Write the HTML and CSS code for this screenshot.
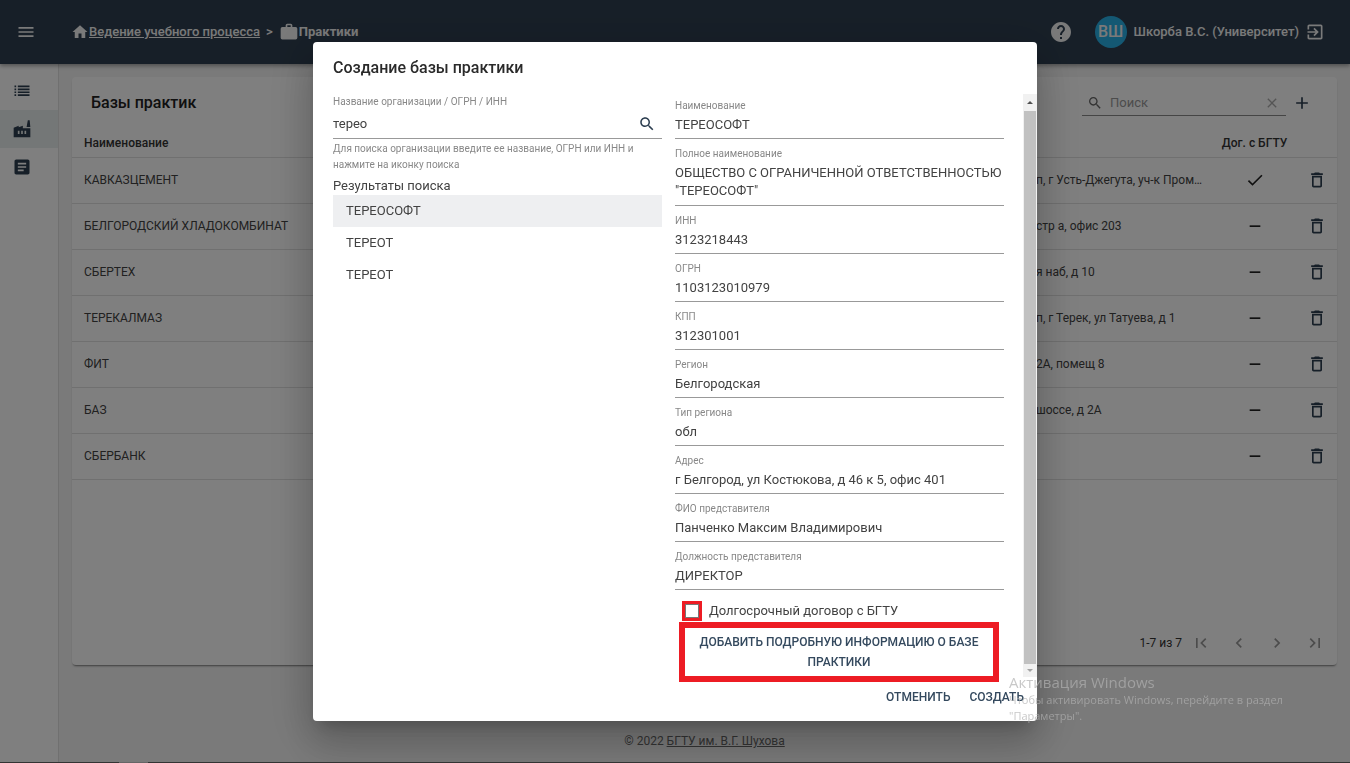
FILE: index.html
```html
<!DOCTYPE html>
<html lang="ru">
<head>
<meta charset="utf-8">
<meta name="viewport" content="width=device-width, initial-scale=1">
<title>Практики</title>
<link rel="stylesheet" href="styles.css">
</head>
<body>
<svg class="sprite" aria-hidden="true">
  <symbol id="trash" viewBox="0 0 24 24"><path d="M6 19c0 1.100.9 2 2 2h8c1.100 0 2-.9 2-2V7H6v12zM8 9h8v10H8V9zm7.500-5l-1-1h-5l-1 1H5v2h14V4z"/></symbol>
  <symbol id="minus" viewBox="0 0 24 24"><path d="M4 11h16v2.500H4z"/></symbol>
  <symbol id="search" viewBox="0 0 24 24"><path d="M15.500 14h-.79l-.28-.27C15.410 12.590 16 11.110 16 9.500 16 5.910 13.090 3 9.500 3S3 5.910 3 9.500 5.910 16 9.500 16c1.610 0 3.090-.59 4.230-1.570l.27.28v.79l5 4.990L20.490 19l-4.990-5zm-6 0C7.010 14 5 11.990 5 9.500S7.010 5 9.500 5 14 7.010 14 9.500 11.990 14 9.500 14z"/></symbol>
</svg>
<div class="app">
  <header class="topbar">
    <button class="icon-btn menu" aria-label="Меню"><svg class="icon i20" viewBox="0 0 24 24"><path d="M3 18h18v-2H3v2zm0-5h18v-2H3v2zm0-7v2h18V6H3z"/></svg></button>
    <nav class="crumbs">
      <svg class="icon i18" viewBox="0 0 24 24"><path d="M10 20v-6h4v6h5v-8h3L12 3 2 12h3v8z"/></svg>
      <a href="#">Ведение учебного процесса</a>
      <span class="sep">&gt;</span>
      <svg class="icon i20" viewBox="0 0 24 24"><path d="M10 2h4a2 2 0 0 1 2 2v2h4a2 2 0 0 1 2 2v11a2 2 0 0 1-2 2H4a2 2 0 0 1-2-2V8a2 2 0 0 1 2-2h4V4a2 2 0 0 1 2-2m4 4V4h-4v2h4z"/></svg>
      <strong>Практики</strong>
    </nav>
    <div class="account">
      <button class="icon-btn help" aria-label="Помощь"><svg class="icon i24" viewBox="0 0 24 24"><path d="M12 2C6.480 2 2 6.480 2 12s4.480 10 10 10 10-4.480 10-10S17.520 2 12 2zm1 17h-2v-2h2v2zm2.070-7.750l-.9.920C13.450 12.900 13 13.500 13 15h-2v-.5c0-1.100.45-2.100 1.170-2.830l1.240-1.260c.37-.36.590-.86.590-1.410 0-1.100-.9-2-2-2s-2 .9-2 2H8c0-2.210 1.790-4 4-4s4 1.790 4 4c0 .88-.36 1.680-.93 2.250z"/></svg></button>
      <span class="avatar">ВШ</span>
      <span class="user">Шкорба В.С. (Университет)</span>
      <button class="icon-btn exit" aria-label="Выйти"><svg class="icon i20" viewBox="0 0 24 24"><path d="M10.090 15.590L11.500 17l5-5-5-5-1.410 1.410L12.670 11H3v2h9.670l-2.580 2.590zM19 3H5c-1.110 0-2 .9-2 2v4h2V5h14v14H5v-4H3v4c0 1.100.89 2 2 2h14c1.100 0 2-.9 2-2V5c0-1.100-.9-2-2-2z"/></svg></button>
    </div>
  </header>
  <div class="workspace">
    <nav class="sidebar">
      <a href="#" aria-label="Список"><svg class="icon i20" viewBox="0 0 24 24"><path d="M3 5.500h2v2H3zm4 0h14v2H7zM3 9h2v2H3zm4 0h14v2H7zm-4 3.500h2v2H3zm4 0h14v2H7zM3 16h2v2H3zm4 0h14v2H7z"/></svg></a>
      <a href="#" class="active" aria-label="Базы практик"><svg class="icon i20" viewBox="0 0 24 24"><path fill-rule="evenodd" d="M2 22V10.500L8 8v2l5-2v3h9v11zM19 1.500h2.200L22 9.500h-4.500zM7 14v4h2v-4zm4 0v4h2v-4zm4 0v4h2v-4z"/></svg></a>
      <a href="#" aria-label="Документы"><svg class="icon i20" viewBox="0 0 24 24"><path d="M19 3H5c-1.100 0-2 .9-2 2v14c0 1.100.9 2 2 2h14c1.100 0 2-.9 2-2V5c0-1.100-.9-2-2-2zm-5 14H7v-2h7v2zm3-4H7v-2h10v2zm0-4H7V7h10v2z"/></svg></a>
    </nav>
    <main class="main">
      <section class="card">
        <div class="card-head">
          <h1>Базы практик</h1>
          <label class="search">
            <svg class="icon i16"><use href="#search"/></svg>
            <input type="text" placeholder="Поиск" aria-label="Поиск">
            <svg class="icon i16 clear" viewBox="0 0 24 24"><path d="M19 6.410L17.590 5 12 10.590 6.410 5 5 6.410 10.590 12 5 17.590 6.410 19 12 13.410 17.590 19 19 17.590 13.410 12z"/></svg>
          </label>
          <button class="icon-btn add" aria-label="Добавить"><svg class="icon i20" viewBox="0 0 24 24"><path d="M19 13h-6v6h-2v-6H5v-2h6V5h2v6h6v2z"/></svg></button>
        </div>
        <table>
          <colgroup><col><col class="c-addr"><col class="c-flag"><col class="c-act"></colgroup>
          <thead><tr><th>Наименование</th><th></th><th class="mid">Дог. с БГТУ</th><th></th></tr></thead>
          <tbody>
            <tr><td>КАВКАЗЦЕМЕНТ</td><td class="addr">п, г Усть-Джегута, уч-к Пром…</td><td class="mid"><svg class="icon i20" viewBox="0 0 24 24"><path d="M9 16.170L4.830 12l-1.420 1.410L9 19 21 7l-1.410-1.410z"/></svg></td><td class="mid"><button class="icon-btn" aria-label="Удалить"><svg class="icon i20"><use href="#trash"/></svg></button></td></tr>
            <tr><td>БЕЛГОРОДСКИЙ ХЛАДОКОМБИНАТ</td><td class="addr">стр а, офис 203</td><td class="mid"><svg class="icon i16"><use href="#minus"/></svg></td><td class="mid"><button class="icon-btn" aria-label="Удалить"><svg class="icon i20"><use href="#trash"/></svg></button></td></tr>
            <tr><td>СБЕРТЕХ</td><td class="addr">я наб, д 10</td><td class="mid"><svg class="icon i16"><use href="#minus"/></svg></td><td class="mid"><button class="icon-btn" aria-label="Удалить"><svg class="icon i20"><use href="#trash"/></svg></button></td></tr>
            <tr><td>ТЕРЕКАЛМАЗ</td><td class="addr">п, г Терек, ул Татуева, д 1</td><td class="mid"><svg class="icon i16"><use href="#minus"/></svg></td><td class="mid"><button class="icon-btn" aria-label="Удалить"><svg class="icon i20"><use href="#trash"/></svg></button></td></tr>
            <tr><td>ФИТ</td><td class="addr">2А, помещ 8</td><td class="mid"><svg class="icon i16"><use href="#minus"/></svg></td><td class="mid"><button class="icon-btn" aria-label="Удалить"><svg class="icon i20"><use href="#trash"/></svg></button></td></tr>
            <tr><td>БАЗ</td><td class="addr">шоссе, д 2А</td><td class="mid"><svg class="icon i16"><use href="#minus"/></svg></td><td class="mid"><button class="icon-btn" aria-label="Удалить"><svg class="icon i20"><use href="#trash"/></svg></button></td></tr>
            <tr><td>СБЕРБАНК</td><td class="addr"></td><td class="mid"><svg class="icon i16"><use href="#minus"/></svg></td><td class="mid"><button class="icon-btn" aria-label="Удалить"><svg class="icon i20"><use href="#trash"/></svg></button></td></tr>
          </tbody>
        </table>
        <div class="pager">
          <span>1-7 из 7</span>
          <button class="icon-btn" disabled aria-label="Первая"><svg class="icon i20" viewBox="0 0 24 24"><path d="M18.410 16.590L13.820 12l4.590-4.590L17 6l-6 6 6 6zM6 6h2v12H6z"/></svg></button>
          <button class="icon-btn" disabled aria-label="Назад"><svg class="icon i20" viewBox="0 0 24 24"><path d="M15.410 7.410L14 6l-6 6 6 6 1.410-1.410L10.830 12z"/></svg></button>
          <button class="icon-btn" disabled aria-label="Вперёд"><svg class="icon i20" viewBox="0 0 24 24"><path d="M10 6L8.590 7.410 13.170 12l-4.580 4.590L10 18l6-6z"/></svg></button>
          <button class="icon-btn" disabled aria-label="Последняя"><svg class="icon i20" viewBox="0 0 24 24"><path d="M5.590 7.410L10.180 12l-4.590 4.590L7 18l6-6-6-6zM16 6h2v12h-2z"/></svg></button>
        </div>
      </section>
      <footer class="footer">© 2022 <a href="#">БГТУ им. В.Г. Шухова</a></footer>
    </main>
  </div>
</div>

<div class="backdrop">
  <div class="dialog" role="dialog" aria-modal="true" aria-labelledby="dlg-title">
    <h2 id="dlg-title">Создание базы практики</h2>
    <div class="dialog-body">
      <div class="columns">
        <div class="finder">
          <div class="field">
            <label for="q">Название организации / ОГРН / ИНН</label>
            <div class="with-icon">
              <input id="q" type="text" value="терео">
              <button class="icon-btn" aria-label="Найти"><svg class="icon i18"><use href="#search"/></svg></button>
            </div>
          </div>
          <p class="hint">Для поиска организации введите ее название, ОГРН или ИНН и нажмите на иконку поиска</p>
          <p class="results-title">Результаты поиска</p>
          <ul class="results">
            <li><button class="selected">ТЕРЕОСОФТ</button></li>
            <li><button>ТЕРЕОТ</button></li>
            <li><button>ТЕРЕОТ</button></li>
          </ul>
        </div>
        <form class="details">
          <div class="field"><label for="f1">Наименование</label><input id="f1" type="text" value="ТЕРЕОСОФТ"></div>
          <div class="field"><label for="f2">Полное наименование</label><textarea id="f2" rows="2">ОБЩЕСТВО С ОГРАНИЧЕННОЙ ОТВЕТСТВЕННОСТЬЮ "ТЕРЕОСОФТ"</textarea></div>
          <div class="field"><label for="f3">ИНН</label><input id="f3" type="text" value="3123218443"></div>
          <div class="field"><label for="f4">ОГРН</label><input id="f4" type="text" value="1103123010979"></div>
          <div class="field"><label for="f5">КПП</label><input id="f5" type="text" value="312301001"></div>
          <div class="field"><label for="f6">Регион</label><input id="f6" type="text" value="Белгородская"></div>
          <div class="field"><label for="f7">Тип региона</label><input id="f7" type="text" value="обл"></div>
          <div class="field"><label for="f8">Адрес</label><input id="f8" type="text" value="г Белгород, ул Костюкова, д 46 к 5, офис 401"></div>
          <div class="field"><label for="f9">ФИО представителя</label><input id="f9" type="text" value="Панченко Максим Владимирович"></div>
          <div class="field"><label for="f10">Должность представителя</label><input id="f10" type="text" value="ДИРЕКТОР"></div>
          <div class="longterm"><span class="mark"><input id="lt" type="checkbox"></span><label for="lt">Долгосрочный договор с БГТУ</label></div>
          <button type="button" class="more">Добавить подробную информацию о базе практики</button>
        </form>
      </div>
      <div class="scrollbar" aria-hidden="true">
        <span class="arrow up"></span><span class="thumb"></span><span class="arrow down"></span>
      </div>
    </div>
    <div class="actions"><button>Отменить</button><button>Создать</button></div>
  </div>
</div>

<div class="taskbar"><span></span></div>
<div class="activation">
  <p class="activation-title">Активация Windows</p>
  <p>Чтобы активировать Windows, перейдите в раздел "Параметры".</p>
</div>
</body>
</html>
```

FILE: styles.css
```css
* { box-sizing: border-box; }
body, h1, h2, p, ul { margin: 0; padding: 0; }
body {
  font: 12px/16px Roboto, "Liberation Sans", sans-serif;
  color: #333;
  background: #f4f4f4;
}
button, input, textarea { font: inherit; color: inherit; margin: 0; }
input, textarea { padding: 0; border: 0; background: none; outline: 0; }
a { color: inherit; }
ul { list-style: none; }
.sprite { display: none; }

.icon { display: block; fill: currentColor; flex: none; }
.i16 { width: 16px; height: 16px; }
.i18 { width: 18px; height: 18px; }
.i20 { width: 20px; height: 20px; }
.i24 { width: 24px; height: 24px; }
.icon-btn {
  display: inline-flex;
  padding: 0;
  border: 0;
  background: none;
  color: #2c3e50;
  vertical-align: middle;
}

.app { display: flex; flex-direction: column; min-height: 100vh; }

/* Top bar */
.topbar {
  display: flex;
  align-items: center;
  height: 64px;
  padding: 0 25px 0 16px;
  background: #2f3f51;
  color: #f4f4f4;
  font-size: 13px;
  font-weight: 500;
  box-shadow: 0 2px 4px rgba(0, 0, 0, .35);
  z-index: 1;
}
.topbar .icon-btn { color: #f4f4f4; }
.crumbs { display: flex; align-items: center; margin-left: 35px; }
.crumbs strong { font-weight: 700; }
.crumbs .sep { margin: 0 6px; }
.account { display: flex; align-items: center; margin-left: auto; }
.avatar {
  display: grid;
  place-items: center;
  width: 32px;
  height: 32px;
  margin: 0 7px 0 22px;
  border-radius: 50%;
  background: #29b0e6;
  font-size: 16px;
}
.exit { margin-left: 6px; }

/* Side navigation */
.workspace { display: flex; flex: 1; }
.sidebar {
  width: 59px;
  padding-top: 8px;
  background: #fff;
  border-right: 1px solid #e0e0e0;
  color: #2c3e50;
}
.sidebar a { display: flex; align-items: center; height: 38px; padding-left: 12px; }
.sidebar .active { background: #e9eeee; }

/* List of organisations */
.main { display: flex; flex: 1; flex-direction: column; padding: 13px 13px 0; }
.card {
  display: flex;
  flex: 1;
  flex-direction: column;
  background: #fff;
  border-radius: 4px;
  box-shadow: 0 2px 2px -1px rgba(0, 0, 0, .5);
}
.card-head { display: flex; align-items: center; height: 52px; padding: 0 25px 0 19px; }
.card-head h1 { color: #212121; font-size: 16px; font-weight: 500; line-height: 20px; }
.search {
  display: flex;
  align-items: center;
  gap: 7px;
  width: 204px;
  height: 26px;
  margin-left: auto;
  border-bottom: 1px solid #8a8a8a;
  color: #666;
  font-size: 13px;
}
.search .icon:first-child { margin-left: -1px; }
.search { padding: 0 6px; }
.search input { flex: 1; min-width: 0; }
.search input::placeholder { color: #999; opacity: 1; }
.search .clear { color: #aaa; }
.add { margin-left: 6px; }
table { width: 100%; border-collapse: collapse; table-layout: fixed; }
.c-addr { width: 180px; }
.c-flag { width: 85px; }
.c-act { width: 40px; }
th, td { padding: 0 0 0 12px; border-bottom: 1px solid #e0e0e0; text-align: left; white-space: nowrap; }
th { height: 28px; font-weight: 500; }
td { height: 46px; color: #424242; }
.addr { padding-left: 4px; }
.mid { padding: 0; text-align: center; }
.mid .icon { margin: 0 auto; }
td.mid { color: #212121; }
.pager { display: flex; align-items: center; gap: 18px; margin: auto 12px 12px auto; }
.pager span { margin-right: -9px; }
.pager .icon-btn { color: #999; }
.footer { padding: 66px 0 12px; line-height: 20px; text-align: center; color: #666; }

/* Dialog */
.backdrop {
  position: fixed;
  inset: 0;
  display: grid;
  place-items: center;
  background: rgba(0, 0, 0, .5);
  z-index: 5;
}
.dialog {
  width: 724px;
  max-width: 94vw;
  background: #fff;
  border-radius: 4px;
  color: #424242;
  font-size: 13px;
  line-height: 18px;
  box-shadow: 0 11px 15px -7px rgba(0, 0, 0, .2), 0 24px 38px 3px rgba(0, 0, 0, .14), 0 9px 46px 8px rgba(0, 0, 0, .12);
}
.dialog h2 { padding: 16px 20px; color: #2a2a2a; font-size: 16px; font-weight: 500; line-height: 20px; }
.dialog-body { display: flex; }
.columns { display: grid; flex: 1; grid-template-columns: 1fr 1fr; gap: 13px; padding: 0 19px 0 20px; }
.field { display: flex; flex-direction: column; gap: 3px; padding-bottom: 4px; border-bottom: 1px solid #999; }
.field label { color: #888; font-size: 10px; line-height: 14px; }
.field input { width: 100%; height: 18px; }
.field textarea { display: block; width: 100%; height: 37px; resize: none; overflow: hidden; }
.finder { padding-top: 1px; }
.finder .field { gap: 6px; padding-bottom: 5px; }
.with-icon { display: flex; align-items: center; padding-right: 6px; }
.hint { padding-top: 2px; color: #888; font-size: 10px; line-height: 16px; }
.results-title { padding-top: 4px; }
.results button {
  display: block;
  width: 100%;
  height: 32px;
  padding: 0 13px;
  border: 0;
  background: none;
  text-align: left;
}
.results .selected { background: #eeeff1; }
.details { display: flex; flex-direction: column; gap: 8px; padding-top: 5px; }
.longterm { display: flex; align-items: center; gap: 7px; margin: 3px 0 -7px 7px; }
.mark { display: flex; padding: 0; border: 3px solid #ed1c24; }
.mark input { appearance: none; width: 14px; height: 14px; border: 1px solid #777; background: #fff; }
.more {
  margin: 0 5px 0 4px;
  padding: 4px 12px;
  border: 6px solid #ed1c24;
  background: none;
  color: #34495e;
  font-size: 12px;
  font-weight: 500;
  line-height: 20px;
  text-transform: uppercase;
}
.scrollbar { display: flex; flex-direction: column; width: 14px; margin-bottom: 5px; padding: 0 1px; background: #f1f1f1; }
.thumb { flex: 1; background: #c1c1c1; }
.arrow { display: grid; place-items: center; height: 17px; }
.arrow::before { content: ""; border: 3px solid transparent; }
.arrow.up::before { border-top: 0; border-bottom-color: #505050; }
.arrow.down { height: 13px; }
.arrow.down::before { border-bottom: 0; border-top-color: #a3a3a3; }
.actions { display: flex; justify-content: flex-end; gap: 19px; padding: 5px 13px 14px; }
.actions button {
  padding: 0;
  border: 0;
  background: none;
  color: #34495e;
  font-size: 12px;
  font-weight: 500;
  line-height: 20px;
  text-transform: uppercase;
}

/* Desktop overlays */
.taskbar { position: fixed; left: 0; right: 0; bottom: 0; height: 1px; background: #333; z-index: 6; }
.taskbar span { display: block; width: 29px; height: 1px; margin-left: 119px; background: #666; }
.activation {
  position: fixed;
  right: 41px;
  bottom: 39px;
  width: 300px;
  color: rgba(176, 176, 176, .7);
  font: 11px/16px "Open Sans", "Noto Sans", sans-serif;
  z-index: 7;
}
.activation-title { font-size: 15px; line-height: 20px; }
```
